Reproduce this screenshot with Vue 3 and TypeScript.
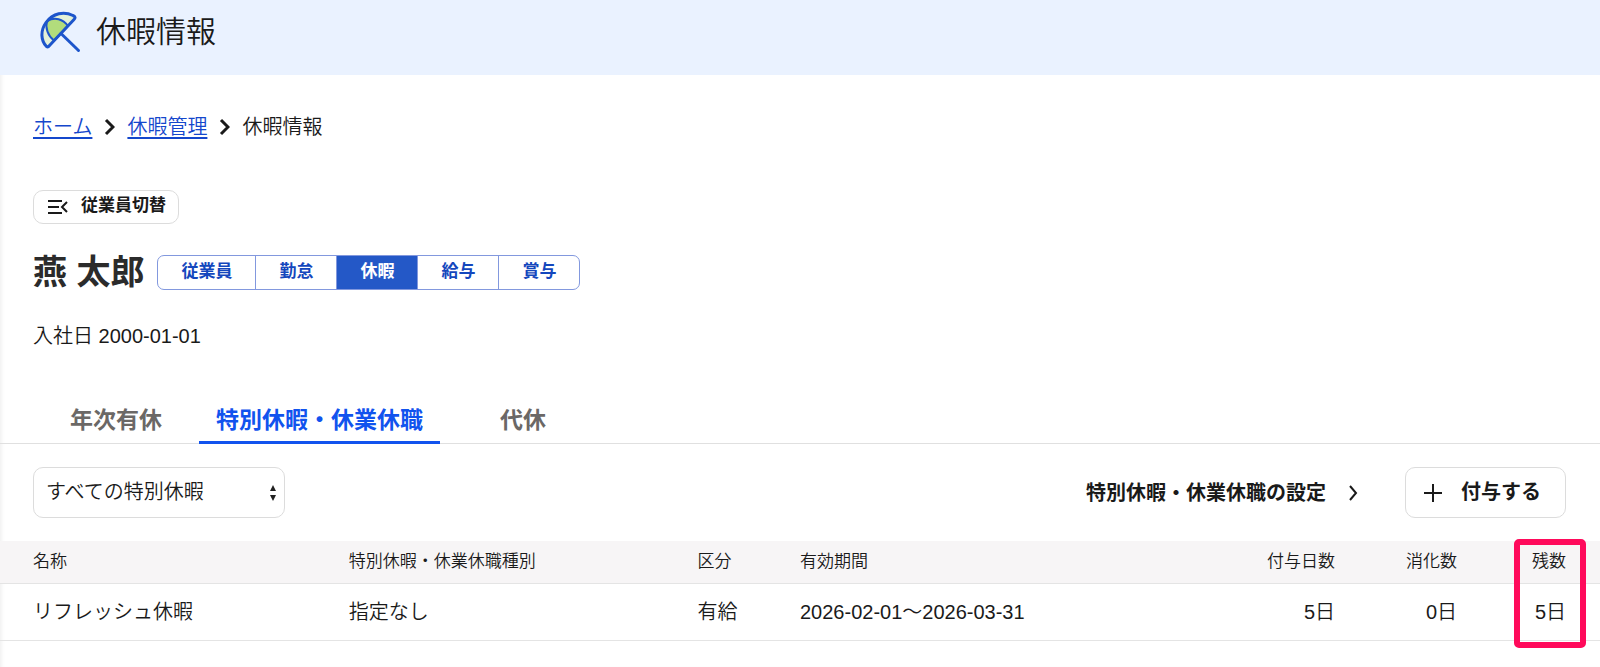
<script setup lang="ts">
import { ref } from 'vue'

interface LeaveRow {
  name: string
  kind: string
  category: string
  period: string
  granted: string
  used: string
  remaining: string
}

const sections = ['従業員', '勤怠', '休暇', '給与', '賞与']
const activeSection = ref('休暇')

const tabs = ['年次有休', '特別休暇・休業休職', '代休']
const activeTab = ref('特別休暇・休業休職')

const leaveFilter = ref('all')

const rows: LeaveRow[] = [
  {
    name: 'リフレッシュ休暇',
    kind: '指定なし',
    category: '有給',
    period: '2026-02-01～2026-03-31',
    granted: '5日',
    used: '0日',
    remaining: '5日',
  },
]
</script>

<template>
  <div class="page">
    <header class="page-header">
      <svg class="umbrella" viewBox="0 0 42 42" aria-hidden="true">
        <path class="panel-pale" d="M7.5 35.5C2 30 1 20 7 11.5C14 2 25 0 34 4.5Q37.500 6 35 8.500L10.500 34.500Q9 36.500 7.500 35.500Z" />
        <path class="panel-green" d="M15 29.500C9 25 6 17 8 10C16 5.500 24 8 29 15Z" />
        <path class="rim" d="M7.500 35.500C2 30 1 20 7 11.500C14 2 25 0 34 4.500Q37.500 6 35 8.500L10.500 34.500Q9 36.500 7.500 35.500Z" />
        <path class="rim" d="M22 22.500L39.500 39.500" />
      </svg>
      <h1>休暇情報</h1>
    </header>

    <main>
      <nav class="breadcrumb" aria-label="パンくず">
        <a href="#home">ホーム</a>
        <svg viewBox="0 0 11 18" aria-hidden="true"><path d="M2 2L9 9L2 16" /></svg>
        <a href="#leave">休暇管理</a>
        <svg viewBox="0 0 11 18" aria-hidden="true"><path d="M2 2L9 9L2 16" /></svg>
        <span>休暇情報</span>
      </nav>

      <button type="button" class="switch-button">
        <svg viewBox="0 0 20 14" aria-hidden="true"><path d="M0 1H14M0 7H11M0 13H14M19 2L14 7L19 12" /></svg>
        <span>従業員切替</span>
      </button>

      <div class="person">
        <h2>燕 太郎</h2>
        <div class="sections">
          <button
            v-for="section in sections"
            :key="section"
            type="button"
            :class="{ active: section === activeSection }"
            @click="activeSection = section"
          >{{ section }}</button>
        </div>
      </div>

      <p class="hire-date">入社日 2000-01-01</p>

      <div class="tabs" role="tablist">
        <button
          v-for="tab in tabs"
          :key="tab"
          type="button"
          role="tab"
          :aria-selected="tab === activeTab"
          :class="{ active: tab === activeTab }"
          @click="activeTab = tab"
        >{{ tab }}</button>
      </div>

      <div class="toolbar">
        <div class="select-box">
          <select v-model="leaveFilter" aria-label="特別休暇">
            <option value="all">すべての特別休暇</option>
          </select>
          <svg viewBox="0 0 6 16" aria-hidden="true"><path d="M3 0L6 6H0ZM3 16L0 10H6Z" /></svg>
        </div>
        <a class="settings-link" href="#settings">
          特別休暇・休業休職の設定
          <svg viewBox="0 0 10 16" aria-hidden="true"><path d="M2 1L8 8L2 15" /></svg>
        </a>
        <button type="button" class="grant-button">
          <svg viewBox="0 0 18 18" aria-hidden="true"><path d="M9 0V18M0 9H18" /></svg>
          <span>付与する</span>
        </button>
      </div>

      <div class="table-area">
        <table>
          <colgroup>
            <col class="col-name" />
            <col class="col-kind" />
            <col class="col-category" />
            <col />
            <col class="col-granted" />
            <col class="col-used" />
            <col class="col-remaining" />
          </colgroup>
          <thead>
            <tr>
              <th scope="col">名称</th>
              <th scope="col">特別休暇・休業休職種別</th>
              <th scope="col">区分</th>
              <th scope="col">有効期間</th>
              <th scope="col" class="num">付与日数</th>
              <th scope="col" class="num">消化数</th>
              <th scope="col" class="num">残数</th>
            </tr>
          </thead>
          <tbody>
            <tr v-for="row in rows" :key="row.name">
              <td>{{ row.name }}</td>
              <td>{{ row.kind }}</td>
              <td>{{ row.category }}</td>
              <td>{{ row.period }}</td>
              <td class="num">{{ row.granted }}</td>
              <td class="num">{{ row.used }}</td>
              <td class="num">{{ row.remaining }}</td>
            </tr>
          </tbody>
        </table>
        <div class="highlight" aria-hidden="true"></div>
      </div>
    </main>
  </div>
</template>

<style>
body {
  margin: 0;
  background: #fff;
}
</style>

<style scoped>
.page {
  min-height: 100vh;
  box-sizing: border-box;
  color: #1a1a1a;
  font: 350 20px/28px "Liberation Sans", "Noto Sans CJK JP", sans-serif;
  box-shadow: inset 4px 0 4px -3px rgba(0, 0, 0, 0.08);
}

svg {
  flex: none;
  fill: none;
  stroke: currentColor;
}

button,
select {
  margin: 0;
  font-family: inherit;
  color: inherit;
  background: none;
  cursor: pointer;
}

h1,
h2,
p {
  margin: 0;
}

.page-header {
  display: flex;
  align-items: center;
  gap: 15px;
  height: 75px;
  padding: 0 34px 11px 39px;
  box-sizing: border-box;
  background: #eaf2ff;
}

.page-header h1 {
  font-size: 30px;
  font-weight: 350;
  line-height: 40px;
}

.umbrella {
  width: 42px;
  height: 42px;
}

.panel-pale {
  fill: #e3f1d8;
  stroke: none;
}

.panel-green {
  fill: #b2dc7c;
  stroke: #1d55cb;
  stroke-width: 2;
}

.rim {
  stroke: #1d55cb;
  stroke-width: 3;
  stroke-linecap: round;
  stroke-linejoin: round;
}

.breadcrumb {
  display: flex;
  align-items: center;
  gap: 12px;
  padding: 38px 33px 0;
}

.breadcrumb a {
  color: #1447cc;
  text-underline-offset: 3px;
}

.breadcrumb svg {
  width: 11px;
  height: 18px;
  stroke-width: 3;
}

.switch-button {
  display: flex;
  align-items: center;
  gap: 13px;
  height: 34px;
  margin: 49px 33px 0;
  padding: 0 12px 0 14px;
  border: 1px solid #dcdcdc;
  border-radius: 10px;
  font-size: 17px;
  font-weight: 700;
  line-height: 24px;
}

.switch-button span,
.grant-button span {
  padding-bottom: 2px;
}

.switch-button svg {
  width: 20px;
  height: 14px;
  stroke-width: 2;
}

.person {
  display: flex;
  align-items: center;
  gap: 12px;
  margin-top: 24px;
  padding: 0 34px 0 33px;
}

.person h2 {
  font-size: 34px;
  font-weight: 700;
  line-height: 48px;
  color: #2b2b2b;
}

.sections {
  display: flex;
  height: 35px;
  margin-left: 1px;
  box-sizing: border-box;
  border: 1px solid #8298de;
  border-radius: 7px;
  overflow: hidden;
}

.sections button {
  padding: 0 23px;
  border: 0;
  font-size: 17px;
  font-weight: 700;
  line-height: 24px;
  color: #1447bd;
}

.sections button + button {
  border-left: 1px solid #8298de;
}

.sections button.active {
  background: #2458c7;
  color: #fff;
}

.hire-date {
  padding: 26px 33px 0;
}

.tabs {
  display: flex;
  margin-top: 44px;
  padding: 0 33px;
  border-bottom: 1px solid #e0e0e0;
}

.tabs button {
  min-width: 166px;
  height: 50px;
  margin-bottom: -1px;
  padding: 0 17px;
  border: 0;
  border-bottom: 3px solid transparent;
  font-size: 23px;
  font-weight: 700;
  color: #6b6866;
}

.tabs button.active {
  border-bottom-color: #1153ee;
  color: #1153ee;
}

.toolbar {
  display: flex;
  align-items: center;
  padding: 23px 34px 23px 33px;
}

.select-box {
  display: grid;
  align-items: center;
  width: 252px;
  margin-right: auto;
}

.select-box select {
  grid-area: 1 / 1;
  width: 100%;
  height: 51px;
  padding: 0 32px 2px 12px;
  border: 1px solid #dcdcdc;
  border-radius: 10px;
  font-size: 20px;
  font-weight: 350;
  appearance: none;
}

.select-box svg {
  grid-area: 1 / 1;
  justify-self: end;
  width: 6px;
  height: 16px;
  margin-right: 9px;
  fill: #222;
  stroke: none;
  pointer-events: none;
}

.settings-link {
  display: flex;
  align-items: center;
  gap: 22px;
  margin-right: 47px;
  font-weight: 700;
  color: inherit;
  text-decoration: none;
}

.settings-link svg {
  width: 10px;
  height: 16px;
  stroke-width: 2;
}

.grant-button {
  display: flex;
  align-items: center;
  gap: 19px;
  height: 51px;
  padding: 0 24px 0 18px;
  border: 1px solid #dcdcdc;
  border-radius: 10px;
  font-size: 20px;
  font-weight: 700;
  line-height: 28px;
}

.grant-button svg {
  width: 18px;
  height: 18px;
  stroke-width: 2;
}

.table-area {
  position: relative;
}

table {
  width: 100%;
  border-collapse: collapse;
  table-layout: fixed;
}

.col-name,
.col-kind {
  width: 21.8%;
}

.col-category {
  width: 6.4%;
}

.col-granted,
.col-used {
  width: 122px;
}

.col-remaining {
  width: 143px;
}

th,
td {
  padding: 0;
  border-bottom: 1px solid #e4e4e4;
  text-align: left;
  font-weight: 350;
}

th {
  height: 42px;
  background: #f7f5f6;
  font-size: 17px;
  line-height: 24px;
}

td {
  height: 56px;
}

th:first-child,
td:first-child {
  padding-left: 33px;
}

th:last-child,
td:last-child {
  padding-right: 34px;
}

.num {
  text-align: right;
}

.highlight {
  position: absolute;
  top: -2px;
  right: 14px;
  bottom: -7px;
  width: 72px;
  box-sizing: border-box;
  border: 6px solid #ff0a5b;
  border-radius: 5px;
  pointer-events: none;
}
</style>
